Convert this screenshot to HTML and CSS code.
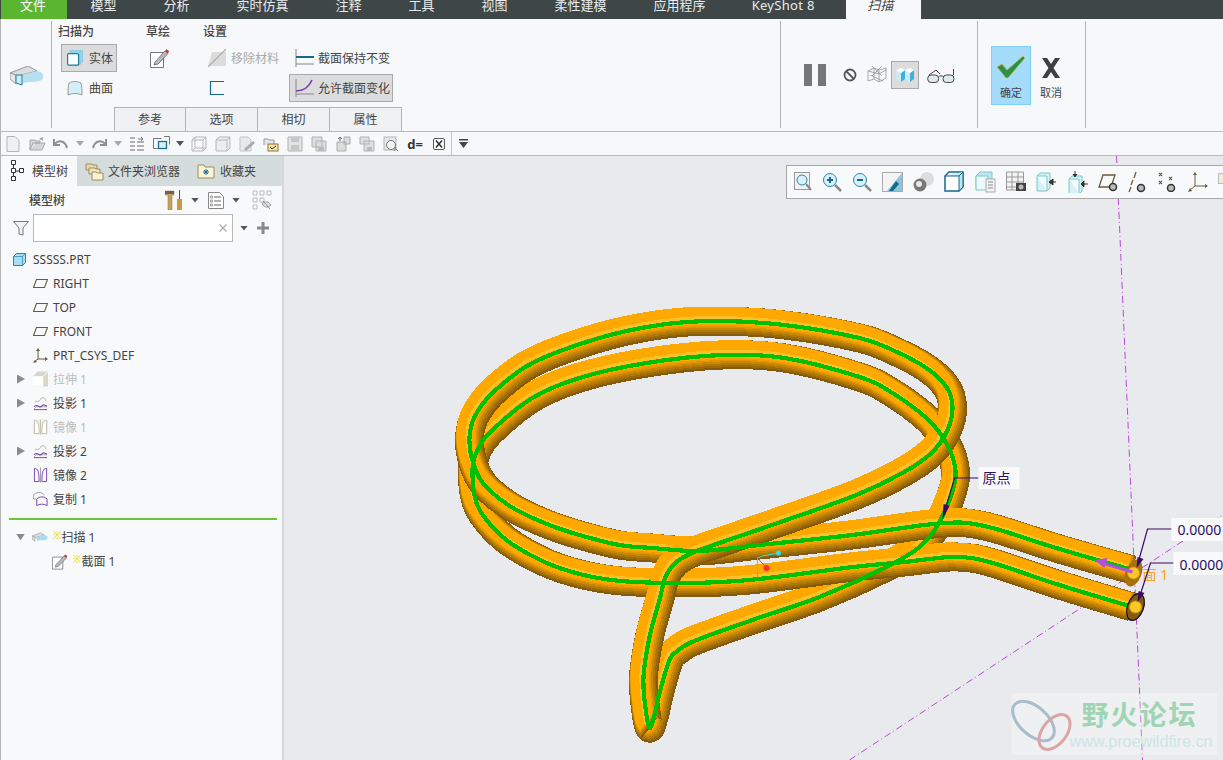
FILE: index.html
```html
<!DOCTYPE html>
<html lang="zh-CN">
<head>
    <meta charset="UTF-8">
    <title>扫描</title>
    <link rel="stylesheet" href="styles.css">
</head>
<body>
<div class="app">
    <nav class="tabs">
        <a class="tab tab-file">文件</a>
        <a class="tab">模型</a>
        <a class="tab">分析</a>
        <a class="tab">实时仿真</a>
        <a class="tab">注释</a>
        <a class="tab">工具</a>
        <a class="tab">视图</a>
        <a class="tab">柔性建模</a>
        <a class="tab">应用程序</a>
        <a class="tab tab-latin">KeyShot 8</a>
        <a class="tab tab-active">扫描</a>
    </nav>

    <section class="ribbon">
        <div class="rb-feature">
            <svg width="34" height="20" viewBox="0 0 34 20"><path d="M0 7 18 0 27 5 8 10z" fill="#ddd" stroke="#999"/><path d="M0 7v6l6 5V9z" fill="#e6e6e6" stroke="#999"/><path d="M8 10 27 5c5 1 7 3 6 7-1 3-6 4-12 4-4 0-7 0-9 2z" fill="#b5e0f2"/><path d="M6 9h6v10l-6-2z" fill="#cfeaf6" stroke="#2a7f9e"/></svg>
        </div>
        <div class="rb-main">
            <div class="rb-groups">
                <div class="rb-group rb-sweep">
                    <div class="rb-label">扫描为</div>
                    <div class="rb-btn rb-on"><svg width="16" height="16" viewBox="0 0 16 16"><path d="M3 .5h12.500V12L12 15.500H3z" fill="#8fd4f0" stroke="#7cc4df" stroke-width=".6"/><rect x=".6" y="3.600" width="11" height="11.500" rx="1" fill="#fff" stroke="#1f7ea1" stroke-width="1.200"/></svg><span>实体</span></div>
                    <div class="rb-btn"><svg width="16" height="16" viewBox="0 0 16 16"><path d="M1 15C1 10 1 7 2 3c4-2 8-2 12 0 1 4 1 7 1 12-5-2-9-2-14 0z" fill="#d5effa" stroke="#9a9a9a"/></svg><span>曲面</span></div>
                </div>
                <div class="rb-group rb-sketch">
                    <div class="rb-label">草绘</div>
                    <svg class="sketch-ic" width="20" height="20" viewBox="0 0 20 20"><path d="M.5 4.500h13v15H.5z" fill="#fff" stroke="#777"/><path d="M5 14 15 3l3 2.500L8 16l-4 1z" fill="#bbb" stroke="#555" stroke-width=".7"/><path d="M15 3l1.500-1.800L19 3l-1 2.500z" fill="#c2343c"/></svg>
                </div>
                <div class="rb-group">
                    <div class="rb-label">设置</div>
                    <div class="rb-cols">
                        <div class="rb-col rb-col-a">
                            <div class="rb-btn rb-off"><svg width="18" height="18" viewBox="0 0 18 18"><path d="M4 3h14v14H0z" fill="#dcdcdc"/><path d="M0 18 18 0" stroke="#a8a8a8" stroke-width="1.200"/></svg><span>移除材料</span></div>
                            <div class="rb-btn"><svg width="18" height="16" viewBox="0 0 18 16"><path d="M16 1.500H2.500v13H16" fill="none" stroke="#17688a" stroke-width="1.200"/></svg></div>
                        </div>
                        <div class="rb-col">
                            <div class="rb-btn rb-wide"><svg width="19" height="20" viewBox="0 0 19 20"><path d="M1 1v18M1 16h18" stroke="#888" fill="none"/><path d="M1 9h18" stroke="#17688a" stroke-width="2"/></svg><span>截面保持不变</span></div>
                            <div class="rb-btn rb-wide rb-on"><svg width="19" height="20" viewBox="0 0 19 20"><path d="M1 1v18M1 16h18" stroke="#888" fill="none"/><path d="M1 13c8 0 13-4 16-11" stroke="#7a3fb0" stroke-width="1.600" fill="none"/></svg><span>允许截面变化</span></div>
                        </div>
                    </div>
                </div>
            </div>
            <div class="rb-tabs">
                <a class="rb-tab">参考</a>
                <a class="rb-tab">选项</a>
                <a class="rb-tab">相切</a>
                <a class="rb-tab">属性</a>
            </div>
        </div>
        <div class="rb-pause">
            <svg class="ic-pause" width="22" height="22" viewBox="0 0 22 22"><path d="M0 0h8v22H0zM14 0h8v22h-8z" fill="#777"/></svg>
            <svg class="ic-no" width="16" height="16" viewBox="0 0 16 16"><circle cx="8" cy="8" r="5.500" fill="none" stroke="#555" stroke-width="1.800"/><path d="M4 4l8 8" stroke="#555" stroke-width="1.800"/></svg>
            <svg class="ic-wire" width="20" height="17" viewBox="0 0 20 17"><path d="M1 5l6-3 5 2 7-2v10l-7 4-5-3-6 2zM7 2v11M12 4v12M1 5l11 3 7-4M5 0l10 10M15 0 5 10M3 9l13 6" fill="none" stroke="#8a8a8a" stroke-width=".7"/></svg>
            <div class="view-on"><svg width="18" height="14" viewBox="0 0 18 14"><path d="M0 2l5 3v9l-5-3zM9 2l5 3v9l-5-3z" fill="#cfeaf5"/><path d="M5 5l4-3v9l-4 3zM14 5l4-3v9l-4 3z" fill="#3cb0e0"/><path d="M0 2l5-2 4 2-4 3zM9 2l5-2 4 2-4 3z" fill="#fff"/></svg></div>
            <svg class="ic-glass" width="28" height="14" viewBox="0 0 28 14"><rect x=".7" y="6" width="11" height="7.500" rx="3.500" fill="#dfeaf0" stroke="#444"/><rect x="16" y="6" width="11" height="7.500" rx="3.500" fill="#dfeaf0" stroke="#444"/><path d="M11.500 8c1-1.500 4-1.500 5 0M2 6l7-5 4 4M26.500 6V0" fill="none" stroke="#444"/></svg>
        </div>
        <div class="rb-ok">
            <a class="ok-btn ok-yes">
                <svg width="30" height="24" viewBox="0 0 30 24"><path d="M1 12l5-3 5 6L27 1l2 2-17 20h-2z" fill="#2f8f4a" stroke="#c9c23a" stroke-width=".8"/></svg>
                <span>确定</span>
            </a>
            <a class="ok-btn">
                <svg class="ok-x" width="22" height="20" viewBox="0 0 22 20"><path d="M2 0h5l4 6 4-6h5l-6.500 10L20 20h-5l-4-6-4 6H2l6.500-10z" fill="#3f3f3f"/></svg>
                <span>取消</span>
            </a>
        </div>
    </section>

    <div class="qat">
        <span class="qi"><svg width="14" height="16" viewBox="0 0 14 16"><path d="M1 .5h8l4 4v11H1z" fill="#f0f0f0" stroke="#b5b5b5"/></svg></span>
        <span class="qi"><svg width="17" height="15" viewBox="0 0 17 15"><path d="M1 14V4h5l1 1h4v2H4l-3 7h12l3-7H6" fill="#d6d6d6" stroke="#a8a8a8"/><path d="M10 3l4-2v4" fill="#aaa"/></svg></span>
        <span class="qi"><svg width="16" height="12" viewBox="0 0 16 12"><path d="M1 1v6h6M2 6c3-4 10-4 12 4" fill="none" stroke="#8f8f8f" stroke-width="2"/></svg></span>
        <span class="qi-arrow"></span>
        <span class="qi"><svg width="16" height="12" viewBox="0 0 16 12"><path d="M15 1v6H9M14 6c-3-4-10-4-12 4" fill="none" stroke="#8f8f8f" stroke-width="2"/></svg></span>
        <span class="qi-arrow"></span>
        <span class="qi"><svg width="14" height="14" viewBox="0 0 14 14"><path d="M0 1h5M0 5h5M0 9h5M0 13h5M7 5h7M7 9h7M7 13h7" stroke="#999" stroke-width="1.500"/><path d="M8 2h5M11 0l2 2-2 2" fill="none" stroke="#777"/></svg></span>
        <span class="qi"><svg width="17" height="15" viewBox="0 0 17 15"><path d="M.5 2.500h8M.5 2.500v10h5M11 .5h5.500v8" fill="none" stroke="#777"/><rect x="5.500" y="5.500" width="8" height="7" fill="#d6eef8" stroke="#1f6f8f" stroke-width="1.300"/></svg></span>
        <span class="qi-arrow qi-dark"></span>
        <span class="qi"><svg width="16" height="16" viewBox="0 0 16 16"><path d="M1 4l3-3h11v11l-3 3H1zM1 4h11v11M12 4l3-3M4 1v11h11M1 15l3-3" fill="none" stroke="#b8b8b8"/></svg></span>
        <span class="qi"><svg width="16" height="16" viewBox="0 0 16 16"><path d="M1 4l3-3h11v11l-3 3H1z" fill="#ececec" stroke="#b8b8b8"/><path d="M1 4h11v11M12 4l3-3" fill="none" stroke="#b8b8b8"/></svg></span>
        <span class="qi"><svg width="16" height="16" viewBox="0 0 16 16"><path d="M1 1h8l3 3v11H1z" fill="#e8e8e8" stroke="#c4c4c4"/><path d="M5 13l9-8 2 2-9 8z" fill="#aaa"/></svg></span>
        <span class="qi"><svg width="16" height="16" viewBox="0 0 16 16"><path d="M1 9V3h4l1 1h5v5" fill="#e5e5e5" stroke="#999"/><rect x="5" y="8" width="10" height="7" fill="#f7e2a6" stroke="#8d7a3a"/><path d="M7 11l2 2 4-3" fill="none" stroke="#333"/></svg></span>
        <span class="qi"><svg width="16" height="16" viewBox="0 0 16 16"><path d="M1 1h14v14H1z" fill="#e2e2e2" stroke="#b2b2b2"/><path d="M4 1h8v5H4zM4 9h8v6H4z" fill="#c6c6c6"/></svg></span>
        <span class="qi"><svg width="16" height="16" viewBox="0 0 16 16"><path d="M1 1h10v10H1zM5 5h10v10H5z" fill="#dcdcdc" stroke="#b2b2b2"/><path d="M7 11h6v4H7z" fill="#bbb"/></svg></span>
        <span class="qi"><svg width="16" height="16" viewBox="0 0 16 16"><path d="M2 6h9v9H2zM9 1h6v7H9z" fill="#dcdcdc" stroke="#aaa"/><path d="M5 1v4M3 3l2-2 2 2" fill="none" stroke="#666"/></svg></span>
        <span class="qi"><svg width="16" height="16" viewBox="0 0 16 16"><path d="M1 1h9v7H1zM5 5h10v10H5z" fill="#dedede" stroke="#b2b2b2"/><path d="M8 11h5v4H8z" fill="#bbb"/></svg></span>
        <span class="qi"><svg width="16" height="16" viewBox="0 0 16 16"><rect x="1" y="1" width="12" height="13" fill="#e6e6e6" stroke="#b5b5b5"/><circle cx="8" cy="9" r="4.500" fill="#f2f2f2" stroke="#777"/><path d="M11 11l4 4M13 11l-2 4" stroke="#777"/></svg></span>
        <span class="qi qi-text">d=</span>
        <span class="qi"><svg width="12" height="12" viewBox="0 0 12 12"><rect x=".5" y=".5" width="11" height="11" rx="1.500" fill="#fff" stroke="#555"/><path d="M3 2.500l6 7M9 2.500l-6 7" stroke="#333" stroke-width="1.600"/></svg></span>
        <span class="qi qi-last"><svg width="9" height="9" viewBox="0 0 9 9"><path d="M0 0h9v1.500H0zM0 3h9L4.500 9z" fill="#444"/></svg></span>
    </div>

    <div class="main">
        <aside class="side">
            <div class="side-tabs">
                <a class="side-tab side-tab-on">
                    <svg width="14" height="24" viewBox="0 0 14 24"><path d="M2.500 5v14M2.500 12H8" stroke="#333" fill="none"/><path d="M.5 1.500h4v4h-4zM.5 9.500h4v4h-4zM.5 17.500h4v4h-4zM8.500 9.500h4v4h-4z" fill="#fff" stroke="#333"/></svg>
                    <span>模型树</span>
                </a>
                <a class="side-tab side-tab-2">
                    <svg width="19" height="19" viewBox="0 0 19 19"><path d="M1 8V2h6l1 1h4v5z" fill="#e7d8a8" stroke="#9c8d5c"/><path d="M4 12V6h6l1 1h4v5z" fill="#efe3bc" stroke="#9c8d5c"/><path d="M7 18v-8h4l1 1h6v7z" fill="#fbf3d4" stroke="#9c8d5c"/></svg>
                    <span>文件夹浏览器</span>
                </a>
                <a class="side-tab side-tab-3">
                    <svg width="18" height="16" viewBox="0 0 18 16"><path d="M1 15V2h6l1 2h9v11z" fill="#fbf3d4" stroke="#9c8d5c"/><path d="M9 6v6M6 9h6M7 7l4 4M11 7l-4 4" stroke="#17688a"/></svg>
                    <span>收藏夹</span>
                </a>
            </div>
            <div class="tree-head">
                <span class="tree-title">模型树</span>
                <svg class="ic-tools" width="18" height="20" viewBox="0 0 18 20"><path d="M0 1h9v4H7v15H3V5H0z" fill="#c9a25c" stroke="#8a7038" stroke-width=".5"/><path d="M0 1h9v3H0z" fill="#666"/><path d="M14 0h1v9h-1z" fill="#555"/><path d="M12 9h5v11h-5z" fill="#c99a3a"/></svg>
                <span class="qi-arrow qi-dark"></span>
                <svg class="ic-list" width="16" height="17" viewBox="0 0 16 17"><path d="M.5.5h11l4 4v12H.5z" fill="#fff" stroke="#888"/><path d="M6 5h7M6 9h7M6 13h7" stroke="#666"/><path d="M2.500 4h2v2h-2zM2.500 8h2v2h-2zM2.500 12h2v2h-2z" fill="none" stroke="#777" stroke-width=".7"/></svg>
                <span class="qi-arrow qi-dark"></span>
                <svg class="ic-tree-off" width="20" height="20" viewBox="0 0 20 20"><path d="M1 1h4v4H1zM1 8h4v4H1zM1 15h4v4H1zM8 1h4v4H8zM15 1h4v4h-4zM8 8h4v4H8z" fill="none" stroke="#bbb"/><path d="M10 14c3-3 6-3 9 1-3 3-6 3-9-1zM11 11l7 8" fill="#ddd" stroke="#888" stroke-width=".8"/></svg>
            </div>
            <div class="tree-filter">
                <svg width="16" height="15" viewBox="0 0 16 15"><path d="M.5.5h15L10 7v7l-4-1V7z" fill="#f2f2f2" stroke="#777"/></svg>
                <div class="filter-box"><svg width="8" height="8" viewBox="0 0 8 8"><path d="M.5.5l7 7M7.500.5l-7 7" stroke="#aaa" stroke-width="1.200"/></svg></div>
                <span class="qi-arrow qi-dark"></span>
                <svg class="ic-plus" width="12" height="12" viewBox="0 0 12 12"><path d="M4.500 0h3v4.500H12v3H7.500V12h-3V7.500H0v-3h4.500z" fill="#8a8a8a"/></svg>
            </div>
            <ul class="tree">
                <li class="row row-root"><svg width="13" height="13" viewBox="0 0 13 13"><path d="M.5 3.500 3.500.5h9v9l-3 3h-9z" fill="#a6dff5" stroke="#2a86a8"/><path d="M9.500 3.500v10M.5 3.500h9l3-3" fill="none" stroke="#2a86a8" stroke-width=".7"/></svg><span>SSSSS.PRT</span></li>
                <li class="row row-child"><svg class="plane" width="15" height="9" viewBox="0 0 15 9"><path d="M3.500.5h11l-3 8H.5z" fill="none" stroke="#6e5a36" stroke-width="1.100"/></svg><span>RIGHT</span></li>
                <li class="row row-child"><svg class="plane" width="15" height="9" viewBox="0 0 15 9"><path d="M3.500.5h11l-3 8H.5z" fill="none" stroke="#6e5a36" stroke-width="1.100"/></svg><span>TOP</span></li>
                <li class="row row-child"><svg class="plane" width="15" height="9" viewBox="0 0 15 9"><path d="M3.500.5h11l-3 8H.5z" fill="none" stroke="#6e5a36" stroke-width="1.100"/></svg><span>FRONT</span></li>
                <li class="row row-child"><svg width="15" height="15" viewBox="0 0 15 15"><path d="M5 2v9M5 11h9M5 11l-4 3" stroke="#6e5a36" fill="none"/><path d="M5 0l2 3H3zM15 11l-3-2v4zM0 15l2-3 2 2z" fill="#6e5a36"/></svg><span>PRT_CSYS_DEF</span></li>
                <li class="row row-caret row-dim"><i class="caret"></i><svg width="15" height="16" viewBox="0 0 16 16"><path d="M0 5l5-5h11v16H0z" fill="#d8d6c8"/><path d="M0 5h11v11H0z" fill="#fff"/><path d="M11 5l5-5" stroke="#fff"/></svg><span>拉伸 1</span></li>
                <li class="row row-caret"><i class="caret"></i><svg width="15" height="15" viewBox="0 0 16 15"><path d="M2 6c3-2 4 1 6-3s5-1 6 2M1 14l2-3h12" fill="none" stroke="#aaa"/><path d="M1 11c2-3 4-1 6 0s3-3 5-2 2 1 3 1" fill="none" stroke="#7a3fb0" stroke-width="1.200"/><path d="M1 14h14" stroke="#7a3fb0"/></svg><span>投影 1</span></li>
                <li class="row row-caret row-dim"><span class="caret-none"></span><svg width="15" height="16" viewBox="0 0 16 16"><rect width="16" height="16" fill="#eeeee6"/><path d="M1.500 15V1c4 0 5 4 5 14zM14.500 15V1c-4 0-5 4-5 14zM8 0v16" fill="#fff" stroke="#c3c0ac"/></svg><span>镜像 1</span></li>
                <li class="row row-caret"><i class="caret"></i><svg width="15" height="15" viewBox="0 0 16 15"><path d="M2 6c3-2 4 1 6-3s5-1 6 2M1 14l2-3h12" fill="none" stroke="#aaa"/><path d="M1 11c2-3 4-1 6 0s3-3 5-2 2 1 3 1" fill="none" stroke="#7a3fb0" stroke-width="1.200"/><path d="M1 14h14" stroke="#7a3fb0"/></svg><span>投影 2</span></li>
                <li class="row row-caret"><span class="caret-none"></span><svg width="15" height="16" viewBox="0 0 16 16"><path d="M1.500 15V1c4 0 5 4 5 14zM14.500 15V1c-4 0-5 4-5 14z" fill="none" stroke="#7a3fb0"/><path d="M8 0v16" stroke="#999"/></svg><span>镜像 2</span></li>
                <li class="row row-caret"><span class="caret-none"></span><svg width="15" height="16" viewBox="0 0 16 16"><path d="M.5 8V5c0-5 11-5 11-1M.5 8h3" fill="none" stroke="#999"/><path d="M4 15V8c3-3 8-3 11 0v7c-3-2-8-2-11 0z" fill="none" stroke="#7a3fb0"/></svg><span>复制 1</span></li>
                <li class="insert-line"></li>
                <li class="row row-sweep"><i class="caret caret-down"></i><svg width="16" height="11" viewBox="0 0 34 20"><path d="M0 7 18 0 27 5 8 10z" fill="#ddd" stroke="#888"/><path d="M0 7v6l6 5V9z" fill="#ddd" stroke="#888"/><path d="M8 10 27 5c5 1 7 3 6 7-1 3-6 4-12 4-4 0-7 0-9 2z" fill="#a8dcf2"/></svg><span><b class="new">※</b>扫描 1</span></li>
                <li class="row row-section"><svg width="16" height="17" viewBox="0 0 20 20"><path d="M.5 4.500h13v15H.5z" fill="#fff" stroke="#777"/><path d="M5 14 15 3l3 2.500L8 16l-4 1z" fill="#bbb" stroke="#555" stroke-width=".7"/><path d="M15 3l1.500-1.800L19 3l-1 2.500z" fill="#c2343c"/></svg><span><b class="new">※</b>截面 1</span></li>
            </ul>
        </aside>

        <div class="canvas">
            <svg class="scene" viewBox="285 156 938 604">
                <path class="datum" d="M1117 156 1143 760"/>
                <path class="datum" d="M850 760 1223 515"/>
                <g id="wire"></g>
                <path class="triad" stroke="#40e860" d="M758 558V577"/>
                <path class="triad" stroke="#30e0e8" d="M758 558 763 556 779 553"/>
                <path class="triad" stroke="#f04848" d="M758 558 767 568"/>
                <circle cx="779" cy="553" r="2.500" fill="#30e0e8"/>
                <circle cx="767" cy="568" r="3" fill="#f83030"/>
                <ellipse cx="1134" cy="573" rx="8" ry="14" transform="rotate(20 1134 573)" fill="#a86f10"/>
                <circle cx="1134" cy="573" r="6" fill="#ffc81e" stroke="#c09a28"/>
                <ellipse cx="1136" cy="607" rx="8" ry="14" transform="rotate(20 1136 607)" fill="#8a5a10" stroke="#111" stroke-width="1.200"/>
                <circle cx="1136" cy="607" r="6" fill="#ffc81e" stroke="#c09a28"/>
                <path d="M1133 572 1106 564" stroke="#b050e0" stroke-width="3"/>
                <path d="M1095 560 1108 558 1105 568z" fill="#b050e0"/>
                <text class="face-label" x="1143" y="580">面 1</text>

                <path class="leader" d="M979 478H955L945 512"/>
                <path class="leader-tip" d="M943 519 944 504 950 506z"/>
                <rect class="dim-box" x="979" y="467" width="41" height="22"/>
                <text class="dim" x="983" y="483">原点</text>

                <path class="leader" d="M1172 529H1148L1138 565"/>
                <path class="leader-tip" d="M1137 568 1138 557 1144 559z"/>
                <rect class="dim-box" x="1172" y="518" width="51" height="23"/>
                <text class="dim" x="1178" y="535">0.0000</text>
                <path class="leader" d="M1174 563H1151L1139 600"/>
                <path class="leader-tip" d="M1138 602 1139 591 1145 593z"/>
                <rect class="dim-box" x="1174" y="552" width="49" height="23"/>
                <text class="dim" x="1180" y="570">0.0000</text>

                <rect class="mark-box" x="1012" y="693" width="206" height="62"/>
                <ellipse class="mark-a" cx="1034" cy="721" rx="25" ry="14" transform="rotate(42 1034 721)"/>
                <ellipse class="mark-b" cx="1055" cy="732" rx="20" ry="12" transform="rotate(-52 1055 732)"/>
                <text class="mark-title" x="1082" y="725">野火论坛</text>
                <text class="mark-url" x="1070" y="747">www.proewildfire.cn</text>
            </svg>
            <div class="view-bar">
                <svg width="18" height="20" viewBox="0 0 18 20"><rect x=".5" y=".5" width="15" height="17" fill="#f2f2f2" stroke="#999"/><circle cx="8" cy="8" r="5" fill="#d8f0fb" stroke="#2a86a8"/><path d="M12 12l5 6" stroke="#888" stroke-width="2"/></svg>
                <svg width="20" height="20" viewBox="0 0 20 20"><circle cx="8" cy="8" r="6.500" fill="#d8f0fb" stroke="#2a86a8"/><path d="M5 8h6M8 5v6" stroke="#17688a" stroke-width="2"/><path d="M13 13l6 6" stroke="#888" stroke-width="2.500"/></svg>
                <svg width="20" height="20" viewBox="0 0 20 20"><circle cx="8" cy="8" r="6.500" fill="#d8f0fb" stroke="#2a86a8"/><path d="M5 8h6" stroke="#17688a" stroke-width="2"/><path d="M13 13l6 6" stroke="#888" stroke-width="2.500"/></svg>
                <svg width="21" height="20" viewBox="0 0 21 20"><rect x=".5" y=".5" width="20" height="19" fill="#8cc6dc" stroke="#aaa"/><path d="M1 1h19L5 19H1z" fill="#f4f4f4"/><path d="M14 9l3 3-6 7H7z" fill="#17688a"/></svg>
                <svg width="21" height="22" viewBox="0 0 21 22"><circle cx="14" cy="8" r="7" fill="#ddd"/><circle cx="7" cy="14" r="6.500" fill="#777"/><circle cx="6" cy="13" r="3" fill="#e8e8e8"/></svg>
                <svg width="21" height="22" viewBox="0 0 21 22"><path d="M1 5l4-4h14v15l-4 4H1z" fill="#fff" stroke="#17688a" stroke-width="1.500"/><path d="M15 5v15l4-4V1zM1 5h14l4-4" fill="#bfe6f4" stroke="#17688a"/></svg>
                <svg width="21" height="22" viewBox="0 0 21 22"><path d="M1 5l4-4h12v15H1z" fill="#bfe6f4" stroke="#7cb"/><path d="M1 5h12v14H1z" fill="#eef8fc" stroke="#7cb"/><rect x="11" y="8" width="9" height="13" fill="#f4f4f4" stroke="#aaa"/><path d="M13 11h5M13 14h5M13 17h5" stroke="#888"/></svg>
                <svg width="20" height="22" viewBox="0 0 20 22"><path d="M.5 1h17v18H.5zM.5 6h17M.5 11h17M.5 16h17M6 1v18M12 1v18" fill="#f4f4f4" stroke="#999"/><rect x="10" y="12" width="10" height="8" fill="#444"/><circle cx="15" cy="16" r="2.500" fill="#bbb"/></svg>
                <svg width="21" height="20" viewBox="0 0 21 20"><path d="M1 4l3-3h10v15l-3 3H1z" fill="#d8f0fb" stroke="#7cb"/><path d="M1 4h10v15" fill="#f4fbfe" stroke="#7cb"/><path d="M13 10h7M13 10l4-3v6z" fill="#333" stroke="#333"/></svg>
                <svg width="21" height="22" viewBox="0 0 21 22"><path d="M2 8l3-3h10v15l-3 3H2z" fill="#d8f0fb" stroke="#7cb"/><path d="M2 8h10v14" fill="#f4fbfe" stroke="#7cb"/><path d="M8 0v5M6 3l2 3 2-3M14 13h7M14 13l3-3v6z" fill="#333" stroke="#333"/></svg>
                <svg width="20" height="20" viewBox="0 0 20 20"><path d="M5 3h12l-4 12H1z" fill="none" stroke="#6e5a36" stroke-width="1.300"/><circle cx="15" cy="15" r="3.500" fill="#bbb" stroke="#333" stroke-width="1.500"/></svg>
                <svg width="20" height="22" viewBox="0 0 20 22"><path d="M8 1 6 7M5 9l-2 5M3 16l-2 5" stroke="#6e5a36" stroke-width="1.300"/><circle cx="13" cy="17" r="3.500" fill="#bbb" stroke="#333" stroke-width="1.500"/></svg>
                <svg width="20" height="20" viewBox="0 0 20 20"><path d="M1 1l3 3M4 1 1 4M11 5l3 3M14 5l-3 3M1 9l3 3M4 9l-3 3" stroke="#6e5a36" stroke-width="1.100"/><circle cx="13" cy="16" r="3.500" fill="#bbb" stroke="#333" stroke-width="1.500"/></svg>
                <svg width="20" height="20" viewBox="0 0 20 20"><path d="M7 3v11M7 14h11M7 14l-5 4" stroke="#6e5a36" fill="none"/><path d="M7 0l2 3H5zM20 14l-3-2v4zM0 20l2-4 2 3z" fill="#6e5a36"/></svg>
                <svg width="16" height="20" viewBox="0 0 16 20"><rect x=".5" y="1.500" width="15" height="10" fill="#f4ecd4" stroke="#bbb"/></svg>
            </div>
        </div>
    </div>
</div>
<script src="wire.js"></script>
</body>
</html>
```

FILE: styles.css
```css
* {
    box-sizing: border-box;
}
html, body {
    margin: 0;
    height: 760px;
    overflow: hidden;
}
body {
    font-family: "Noto Sans", "Noto Sans CJK SC", sans-serif;
    font-size: 12px;
    color: #444;
}
ul {
    list-style: none;
    margin: 0;
    padding: 0;
}
.app {
    height: 760px;
    display: flex;
    flex-direction: column;
    border-left: 1px solid #b5b5b5;
    background: #f7f8fa;
}

/* top tabs */
.tabs {
    display: flex;
    height: 19px;
    flex: none;
    background: #3e4648;
    overflow: hidden;
    margin-left: -1px;
    padding-left: 1px;
}
.tab {
    padding: 0 23.5px;
    font-size: 13px;
    line-height: 11px;
    color: #e8ecec;
    white-space: nowrap;
}
.tab-file {
    width: 66px;
    padding: 0 19px;
    background: #5cb531;
    color: #fff;
}
.tab-latin {
    letter-spacing: .3px;
    padding-left: 22.5px;
}
.tab-active {
    margin-left: 8px;
    padding: 0 21px;
    width: 75px;
    background: #f7f8fa;
    color: #444;
    font-style: italic;
}

/* ribbon */
.ribbon {
    display: flex;
    flex: none;
    height: 113px;
    border-bottom: 1px solid #b8b8b8;
}
.rb-feature {
    width: 51px;
    margin: 2px 0 3px;
    padding: 45px 0 0 9px;
    border-right: 1px solid #b5b5b5;
}
.rb-main {
    width: 350px;
    flex: none;
}
.rb-groups {
    display: flex;
    height: 88px;
    padding: 5px 0 0 6px;
}
.rb-group {
    flex: none;
}
.rb-sweep {
    width: 88px;
}
.rb-sketch {
    width: 57px;
}
.rb-label {
    height: 16px;
    line-height: 16px;
    margin-bottom: 4px;
    font-weight: 500;
    color: #444;
}
.rb-cols {
    display: flex;
}
.rb-col {
    display: flex;
    flex-direction: column;
    gap: 2px;
}
.rb-col-a {
    width: 86px;
}
.rb-btn {
    display: flex;
    align-items: center;
    gap: 6px;
    height: 28px;
    padding-left: 5px;
    border: 1px solid transparent;
}
.rb-sweep .rb-btn {
    width: 56px;
    margin-left: 3px;
}
.rb-sweep .rb-btn + .rb-btn {
    margin-top: 2px;
}
.rb-col-a .rb-btn {
    padding-left: 4px;
    gap: 5px;
}
.rb-wide {
    width: 104px;
    gap: 4px;
    white-space: nowrap;
}
.rb-on {
    background: #dcdcdc;
    border-color: #aaa;
}
.rb-off {
    color: #aaa;
}
.sketch-ic {
    display: block;
    margin: 8px 0 0 4px;
}
.rb-tabs {
    display: flex;
    margin-left: 62px;
    width: 288px;
    height: 24px;
}
.rb-tab {
    width: 72px;
    text-align: center;
    line-height: 23px;
    background: #f0f1f3;
    border: 1px solid #b4b4b4;
    border-bottom: 0;
    border-left: 0;
}
.rb-tab:first-child {
    border-left: 1px solid #b4b4b4;
}
.rb-pause {
    display: flex;
    align-items: center;
    flex: none;
    width: 197px;
    margin: 2px 0 3px 378px;
    padding-left: 23px;
    border-left: 1px solid #b5b5b5;
}
.ic-no {
    margin-left: 16px;
}
.ic-wire {
    margin-left: 9px;
}
.view-on {
    display: flex;
    align-items: center;
    justify-content: center;
    width: 28px;
    height: 28px;
    margin-left: 4px;
    background: #dcdcdc;
    border: 1px solid #aaa;
}
.ic-glass {
    margin-left: 8px;
    margin-top: 2px;
}
.rb-ok {
    display: flex;
    align-items: center;
    flex: none;
    width: 109px;
    margin: 2px 0 3px;
    padding-left: 13px;
    border-left: 1px solid #b5b5b5;
    border-right: 1px solid #b5b5b5;
}
.ok-btn {
    display: flex;
    flex-direction: column;
    align-items: center;
    gap: 6px;
    width: 40px;
    height: 59px;
    margin-top: 2px;
    padding-top: 8px;
    font-size: 11px;
    line-height: 15px;
    border: 1px solid transparent;
}
.ok-x {
    margin: 3px 0 1px;
}
.ok-yes {
    background: #a5dcfb;
    border-color: #7fd0f5;
}

/* quick access row */
.qat {
    display: flex;
    align-items: center;
    flex: none;
    height: 24px;
    border-bottom: 1px solid #b8b8b8;
    background: #f7f8fa;
}
.qi {
    display: flex;
    align-items: center;
    justify-content: center;
    flex: none;
    width: 24px;
}
.qi-text {
    font-size: 13px;
    font-weight: 700;
    color: #333;
}
.qi-last {
    border-left: 1px solid #c4c4c4;
    height: 23px;
}
.qi-arrow {
    flex: none;
    width: 14px;
    height: 5px;
    background: #a8a8a8;
    clip-path: polygon(3px 0, 11px 0, 7px 5px);
}
.qi-dark {
    background: #555;
}

/* model tree */
.main {
    display: flex;
    flex: 1;
    min-height: 0;
}
.side {
    width: 283px;
    flex: none;
    background: #f7f9fb;
    border-right: 2px solid #d4d8da;
}
.side-tabs {
    display: flex;
    height: 30px;
    background: #d5dcdc;
}
.side-tab {
    display: flex;
    align-items: center;
    gap: 5px;
    white-space: nowrap;
}
.side-tab-on {
    width: 76px;
    padding-left: 10px;
    gap: 7px;
    background: #f7f9fb;
}
.side-tab-2 {
    padding-left: 8px;
    gap: 4px;
}
.side-tab-3 {
    padding-left: 17px;
}
.tree-head {
    display: flex;
    align-items: center;
    height: 28px;
    padding-left: 28px;
}
.tree-title {
    width: 136px;
    font-weight: 500;
}
.ic-tools {
    margin-right: 5px;
}
.ic-list {
    margin-left: 6px;
    margin-right: 5px;
}
.ic-tree-off {
    margin-left: 9px;
}
.tree-filter {
    display: flex;
    align-items: center;
    height: 28px;
    padding-left: 12px;
}
.filter-box {
    display: flex;
    align-items: center;
    justify-content: flex-end;
    width: 200px;
    height: 28px;
    margin: 0 4px;
    padding-right: 5px;
    background: #fff;
    border: 1px solid #b8b8b8;
}
.ic-plus {
    margin-left: 6px;
}
.tree {
    margin-top: 5px;
}
.row {
    display: flex;
    align-items: center;
    gap: 5px;
    height: 24px;
    white-space: nowrap;
}
.row svg {
    flex: none;
}
.row-root {
    padding-left: 12px;
    gap: 7px;
}
.row-child {
    padding-left: 32px;
}
.row-caret {
    padding-left: 16px;
}
.row-dim {
    color: #bdbdbd;
}
.caret {
    flex: none;
    width: 11px;
    height: 9px;
    background: #8a8a8a;
    clip-path: polygon(0 0, 8px 4.5px, 0 9px);
}
.caret-none {
    flex: none;
    width: 11px;
}
.insert-line {
    height: 2px;
    width: 268px;
    margin: 7px 0 5px 8px;
    background: #66c63c;
}
.row-sweep {
    padding-left: 15px;
}
.caret-down {
    width: 11px;
    height: 7px;
    clip-path: polygon(0 0, 9px 0, 4.5px 7px);
}
.row-section {
    padding-left: 51px;
}
.new {
    font-weight: 400;
    font-size: 10px;
    color: #e4dc00;
    vertical-align: 3px;
}

/* graphics window */
.canvas {
    position: relative;
    flex: 1;
    min-width: 0;
    overflow: hidden;
    background: #e8eaed;
}
.scene {
    position: absolute;
    inset: 0;
    width: 100%;
    height: 100%;
}
.datum {
    fill: none;
    stroke: #b848dc;
    stroke-width: 1;
    stroke-dasharray: 7 3 1 3;
}
.triad {
    fill: none;
    stroke-width: 1;
}
.leader {
    fill: none;
    stroke: #3a0a6a;
    stroke-width: 1.200;
}
.leader-tip {
    fill: #3a0a6a;
}
.dim-box {
    fill: #f7f9fb;
}
.dim {
    font-size: 14px;
    fill: #2e0f5f;
}
.face-label {
    font-size: 14px;
    fill: #f5a623;
}
.mark-box {
    fill: rgba(255, 255, 255, .28);
}
.mark-a {
    fill: none;
    stroke: #a8bccc;
    stroke-width: 3;
}
.mark-b {
    fill: none;
    stroke: #dca4a4;
    stroke-width: 3;
}
.mark-title {
    font-size: 27px;
    font-weight: 700;
    letter-spacing: 2px;
    fill: #9fd5b3;
}
.mark-url {
    font-family: "Liberation Sans", sans-serif;
    font-size: 16.200px;
    fill: #cfe4e6;
}
.view-bar {
    position: absolute;
    top: 9px;
    left: 502px;
    display: flex;
    align-items: center;
    gap: 10px;
    width: 450px;
    height: 34px;
    padding-left: 7px;
    background: #f7f9fb;
    border: 1px solid #a8a8a8;
}
.view-bar svg {
    flex: none;
}
```

FILE: wire.js
```js
// centre line of the swept wire, from the upper free end round to the lower one
var pts = [
    [1133,570],[1060,549],[1010,533],[985,526],[960,522.5],[925,525],[853,535],[760,545],[700,551],[653,548],
    [620,545],[580,535],[550,525],[517,510],[493,493],[480,478],[472,457],[470,437],[475,417],[493,393],
    [533,363],[600,338],[660,325],[716,321],[785,325],[860,338],[893,350],[927,368],[947,387],[953,407],
    [948,430],[932,453],[903,473],[857,495],[787,520],[720,543],[695,552],[677,562],[666,577],[660,600],
    [650,637],[644,677],[646,708],[650,728],[655,715],[660,693],[670,660],[678,651],[695,641],[753,620],
    [820,597],[887,567],[920,547],[937,527],[950,500],[956,477],[953,457],[943,437],[927,418],[893,393],
    [860,377],[785,358],[723,355],[647,363],[580,378],[533,398],[493,430],[478,450],[473,470],[477,503],
    [493,527],[517,547],[560,568],[612,580],[681,583],[750,580],[854,567],[905,562],[950,557],[975,558.5],
    [1000,565],[1060,585],[1133,607]
];

// catmull-rom through pts[from..to]
function curve(from, to) {
    var d = 'M' + pts[from];
    for (var i = from; i < to; i++) {
        var p0 = pts[Math.max(i - 1, 0)], p1 = pts[i], p2 = pts[i + 1], p3 = pts[Math.min(i + 2, pts.length - 1)];
        d += 'C' + (p1[0] + (p2[0] - p0[0]) / 6) + ' ' + (p1[1] + (p2[1] - p0[1]) / 6) + ' ' +
            (p2[0] - (p3[0] - p1[0]) / 6) + ' ' + (p2[1] - (p3[1] - p1[1]) / 6) + ' ' + p2[0] + ' ' + p2[1];
    }
    return d;
}

// shaded tube: width, colour, shift up towards the light
var layers = [
    [29, '#855a0c', 0],
    [27, '#986a09', 1],
    [25, '#b07806', 2],
    [23, '#c88602', 3],
    [21, '#e09400', 4],
    [19.5, '#f29e00', 4.75],
    [18, '#ffa800', 5.5],
    [3, '#ffc02a', 3.5]
];
var wire = document.getElementById('wire');

function add(d, width, colour, shift) {
    var p = document.createElementNS('http://www.w3.org/2000/svg', 'path');
    p.setAttribute('d', d);
    p.setAttribute('fill', 'none');
    p.setAttribute('stroke', colour);
    p.setAttribute('stroke-width', width);
    p.setAttribute('stroke-linejoin', 'round');
    p.setAttribute('shape-rendering', 'crispEdges');
    p.setAttribute('transform', 'translate(' + (-shift * .7) + ' ' + (-shift) + ')');
    wire.appendChild(p);
}

// back to front: return leg and second coil top, second coil and lower end, first coil, crossing leg
[[43, 67], [67, 82], [0, 30], [30, 43]].forEach(function (seg) {
    var d = curve(seg[0], seg[1]);
    layers.forEach(function (l) { add(d, l[0], l[1], l[2]); });
});
add(curve(0, pts.length - 1), 4.2, '#00c000', 0);
```
